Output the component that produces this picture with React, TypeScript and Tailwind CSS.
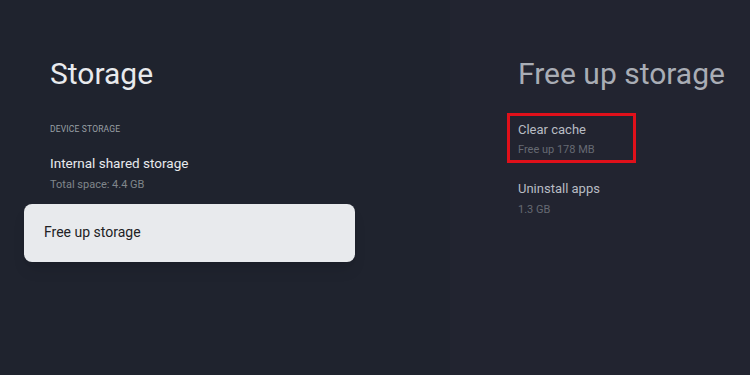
import React from 'react';

const font = { fontFamily: 'Roboto, "Noto Sans", sans-serif' };

export default function App() {
  return (
    <div className="flex w-[750px] h-[375px] overflow-hidden bg-[#1f232e]" style={font}>
      <div className="w-[450px] shrink-0 flex flex-col pt-[56px]">
        <h1 className="pl-[50px] text-[30px] leading-[36px] text-[#e8eaed] font-normal">Storage</h1>
        <div className="pl-[50px] mt-[32px] text-[8.5px] leading-[10px] tracking-[0.02em] text-[#9aa0a6]">DEVICE STORAGE</div>
        <div className="pl-[50px] mt-[21px] text-[13.5px] leading-[16px] text-[#e8eaed]">Internal shared storage</div>
        <div className="pl-[50px] mt-[7px] text-[11px] leading-[14px] text-[#80868b]">Total space: 4.4 GB</div>
        <div className="ml-[24px] mt-[12px] w-[331px] h-[58px] rounded-[8px] bg-[#e8eaed] flex items-center pl-[20px] pb-[2px] text-[14px] text-[#202124] shadow-lg">
          Free up storage
        </div>
      </div>
      <div className="flex-1 bg-[#222430] flex flex-col pt-[56px] pl-[68px]">
        <h2 className="text-[30px] leading-[36px] text-[#a9adb5] font-normal whitespace-nowrap">Free up storage</h2>
        <div className="-ml-[11px] mt-[21px] w-[129px] h-[50px] border-[3px] border-[#e0101a] pl-[8px] pt-[6px]">
          <div className="text-[13px] leading-[16px] text-[#b8bcc3]">Clear cache</div>
          <div className="mt-[5px] text-[11px] leading-[13px] text-[#666a73]">Free up 178 MB</div>
        </div>
        <div className="mt-[18px] text-[13px] leading-[16px] text-[#b8bcc3]">Uninstall apps</div>
        <div className="mt-[6px] text-[11px] leading-[13px] text-[#666a73]">1.3 GB</div>
      </div>
    </div>
  );
}
